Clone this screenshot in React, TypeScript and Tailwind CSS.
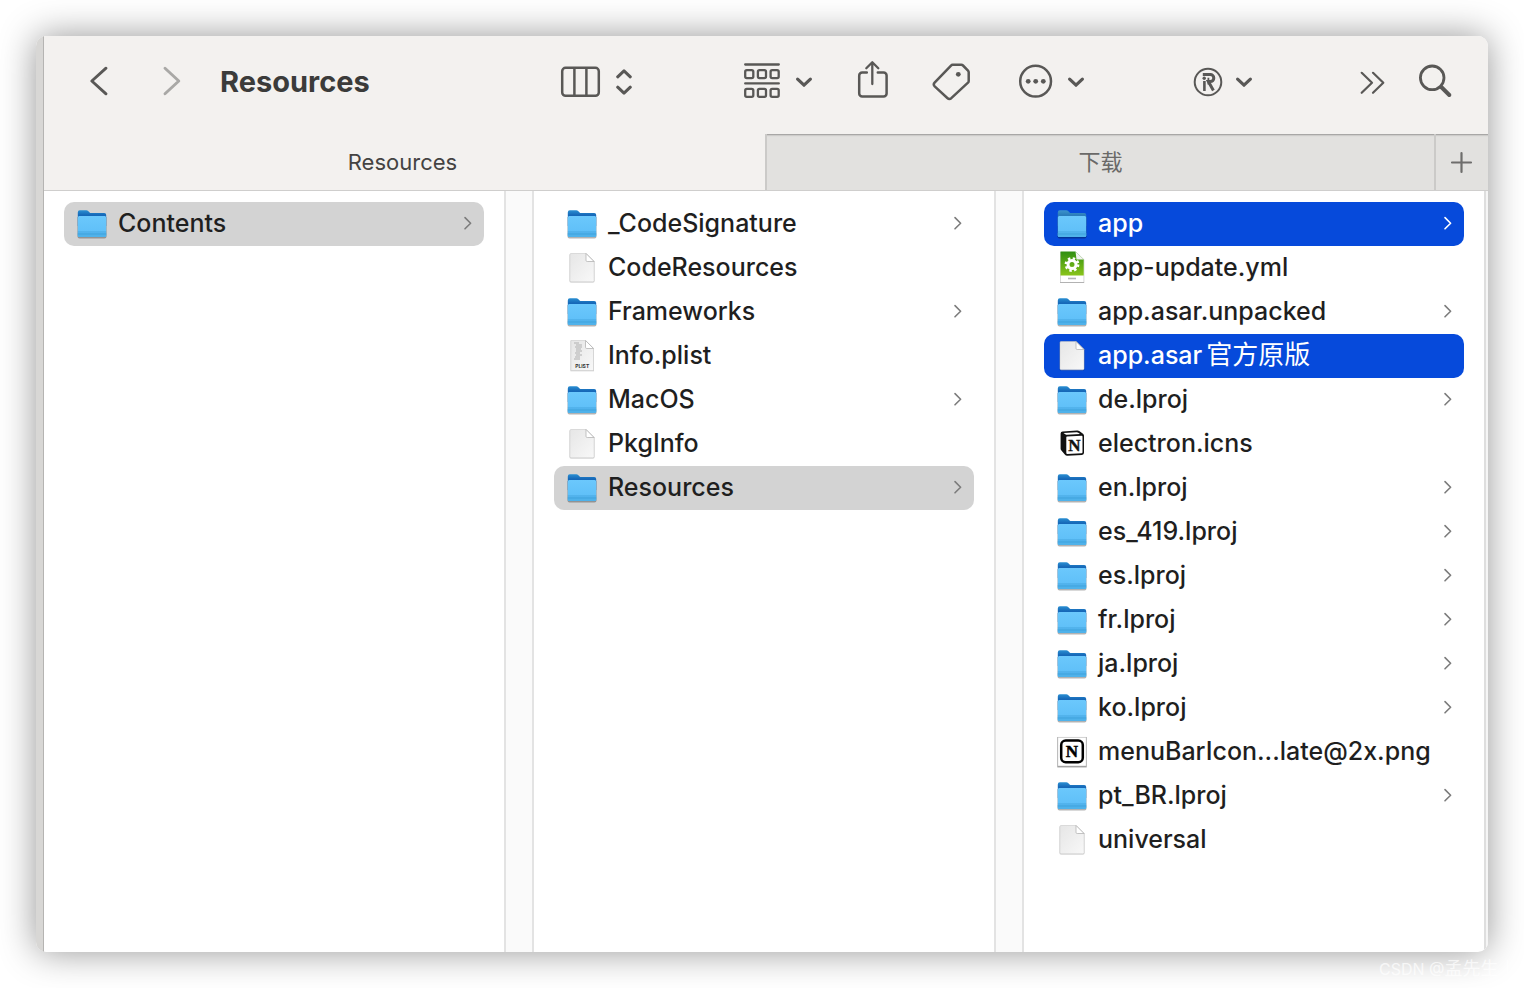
import React, { useState } from "react";

const ink = "#595856";

function Chevron({ className = "" }: { className?: string }) {
  return (
    <svg width="20" height="44" viewBox="0 0 20 44" fill="none" className={className} aria-hidden="true">
      <path d="M3.6 19.2 10 25.2 16.4 19.2" stroke={ink} strokeWidth="3.2" strokeLinecap="round" strokeLinejoin="round" />
    </svg>
  );
}

function ArrowIcon({ color, flip = false }: { color: string; flip?: boolean }) {
  return (
    <svg width="40" height="44" viewBox="0 0 40 44" fill="none" aria-hidden="true">
      <path d={flip ? "M13 8.2 26.8 21 13 33.8" : "M27 8.2 12.8 21 27 33.8"} stroke={color} strokeWidth="2.9" strokeLinecap="round" strokeLinejoin="round" />
    </svg>
  );
}

function ColumnsIcon() {
  return (
    <svg width="72" height="44" viewBox="0 0 72 44" fill="none" stroke={ink} aria-hidden="true">
      <rect x="2.2" y="7.8" width="36.6" height="28" rx="3.4" strokeWidth="2.5" />
      <path d="M14.4 8v28M26.4 8v28" strokeWidth="2.5" />
      <path d="M57.7 16.8 64 10.8 70.3 16.8M57.7 27.2 64 33.2 70.3 27.2" strokeWidth="3" strokeLinecap="round" strokeLinejoin="round" />
    </svg>
  );
}

function GroupIcon() {
  return (
    <svg width="36" height="44" viewBox="0 0 36 44" fill="none" stroke={ink} strokeWidth="2.3" aria-hidden="true">
      <path d="M1.2 4.5h33.6M1.2 23.4h33.6" strokeLinecap="round" />
      {[1.2, 13.9, 26.6].map((x) => (
        <g key={x}>
          <rect x={x} y="10.2" width="8.1" height="8" rx="1.6" />
          <rect x={x} y="28.8" width="8.1" height="8" rx="1.6" />
        </g>
      ))}
    </svg>
  );
}

function ShareIcon() {
  return (
    <svg width="32" height="44" viewBox="0 0 32 44" fill="none" stroke={ink} strokeWidth="2.5" strokeLinecap="round" strokeLinejoin="round" aria-hidden="true">
      <path d="M9.8 12.6H5.2a3 3 0 0 0-3 3V33.6a3 3 0 0 0 3 3H26.6a3 3 0 0 0 3-3V15.6a3 3 0 0 0-3-3H20.8" />
      <path d="M15.3 24V3M9.3 8.2 15.3 2.2 21.3 8.2" strokeWidth="2.3" />
    </svg>
  );
}

function TagIcon() {
  return (
    <svg width="40" height="44" viewBox="0 0 40 44" fill="none" aria-hidden="true">
      <path d="M20.6 4.8H29.3Q30.3 4.8 31 5.5L36 10.6Q36.7 11.3 36.7 12.3V21Q36.7 22 36 22.7L19.3 38.2Q17.3 39.8 15.3 38L2.7 26.3Q.9 24.5 2.6 22.7L19 5.6Q19.7 4.8 20.6 4.8Z" stroke={ink} strokeWidth="2.5" strokeLinejoin="round" />
      <circle cx="26.3" cy="14.3" r="2.4" fill={ink} />
    </svg>
  );
}

function MoreIcon() {
  return (
    <svg width="36" height="44" viewBox="0 0 36 44" fill="none" aria-hidden="true">
      <circle cx="17.6" cy="21.2" r="15.4" stroke={ink} strokeWidth="2.5" />
      <g fill={ink}>
        <circle cx="10.2" cy="21.3" r="2.4" />
        <circle cx="17.7" cy="21.3" r="2.4" />
        <circle cx="25.3" cy="21.3" r="2.4" />
      </g>
    </svg>
  );
}

function RegisteredIcon() {
  return (
    <svg width="32" height="44" viewBox="0 0 32 44" fill="none" stroke={ink} aria-hidden="true">
      <circle cx="16" cy="22" r="13.3" strokeWidth="2" />
      <path d="M10.8 14.6H18.3A3.5 3.5 0 0 1 18.3 21.600H16.400L21.400 30.400" strokeWidth="3" />
      <path d="M12.400 21V31" strokeWidth="2.600" />
      <path d="M16.400 17.800V24.500" strokeWidth="1.800" />
      <circle cx="12.200" cy="18.300" r="1.700" fill={ink} stroke="none" />
    </svg>
  );
}

function MoreItemsIcon() {
  return (
    <svg width="28" height="44" viewBox="0 0 28 44" fill="none" stroke={ink} strokeWidth="2.2" strokeLinecap="round" strokeLinejoin="round" aria-hidden="true">
      <path d="M2.7 12.8 13 22.8 2.7 32.8M14 12.8 24.3 22.8 14 32.8" />
    </svg>
  );
}

function SearchIcon() {
  return (
    <svg width="36" height="44" viewBox="0 0 36 44" fill="none" stroke={ink} strokeLinecap="round" aria-hidden="true">
      <circle cx="14.2" cy="17.8" r="11.8" strokeWidth="2.8" />
      <path d="M23.3 27 31.3 35" strokeWidth="4" />
    </svg>
  );
}

function FolderIcon({ muted }: { muted?: boolean }) {
  return (
    <svg width="32" height="36" viewBox="0 0 32 36" aria-hidden="true">
      <defs>
        <linearGradient id="folderBack" x1="0" y1="0" x2="0" y2="1">
          <stop offset="0" stopColor="#2a8fd2" />
          <stop offset=".3" stopColor="#1668b8" />
        </linearGradient>
        <linearGradient id="folderFront" x1="0" y1="0" x2="0" y2="1">
          <stop offset="0" stopColor="#6bc8fc" />
          <stop offset="1" stopColor="#5cbdf7" />
        </linearGradient>
        <linearGradient id="folderBackMuted" x1="0" y1="0" x2="0" y2="1">
          <stop offset="0" stopColor="#3d94cc" />
          <stop offset=".3" stopColor="#2b7dbb" />
        </linearGradient>
      </defs>
      <path d="M1.5 11H30.5V30.4Q30.500 32.400 28.500 32.400H3.500Q1.500 32.400 1.500 30.400Z" fill="#000" opacity=".3" />
      <path d="M1.8 6.5Q1.8 4.3 3.8 4.3H10.2Q11.5 4.3 12.4 5.2L13.6 6.4Q14.2 7 15.2 7H28.2Q30.2 7 30.2 9V20H1.8Z" fill={muted ? "url(#folderBackMuted)" : "url(#folderBack)"} />
      <path d="M1.8 11.5Q1.8 10 3.3 10H28.7Q30.2 10 30.2 11.5V29.500Q30.200 31 28.700 31H3.300Q1.800 31 1.800 29.500Z" fill="url(#folderFront)" />
      <path d="M1.8 27H30.2V29.500Q30.200 31 28.700 31H3.300Q1.800 31 1.800 29.500Z" fill="#4fb2ea" />
      <path d="M1.8 26H30.2M1.8 28H30.2" stroke="#3a9bd8" strokeWidth=".7" />
    </svg>
  );
}

function PageIcon({ plist = false }: { plist?: boolean }) {
  return (
    <svg width="32" height="36" viewBox="0 0 32 36" aria-hidden="true">
      <defs>
        <linearGradient id="paper" x1="0" y1="0" x2="1" y2="1">
          <stop offset="0" stopColor="#e6e6e6" />
          <stop offset="1" stopColor="#f8f8f8" />
        </linearGradient>
      </defs>
      <path d={plist ? "M4.5 2.5H20L28 10.5V33.2H4.5Z" : "M5 3.5H20.5L28.5 11.5V31Q28.5 32.5 27 32.5H5Q3.5 32.5 3.5 31V5Q3.5 3.5 5 3.5Z"} fill="#000" opacity=".22" />
      <path d={plist ? "M5 2.5H19.5L27.5 10.5V32.5H5Z" : "M5 3.5H20L28 11.5V30.6Q28 31.8 26.8 31.8H5.2Q4 31.8 4 30.6V4.5Q4 3.5 5 3.5Z"} fill="url(#paper)" stroke="#cfcfcf" strokeWidth=".5" />
      <path d={plist ? "M19.5 2.5V9.3Q19.5 10.5 20.7 10.5H27.5Z" : "M20 3.5V10.3Q20 11.5 21.2 11.5H28Z"} fill="#fff" stroke="#b4b4b4" strokeWidth=".8" />
      {plist && (
        <g>
          <path d="M8 5h5M10 7h6M9 9h7M10 11h5M10 13h6M9 15h5M10 17h6M9 19h5M8 21h6" stroke="#b0b0b0" strokeWidth="1.1" />
          <text x="16.2" y="29.6" textAnchor="middle" fontFamily="Inter, sans-serif" fontSize="5" fontWeight="700" fill="#333">PLIST</text>
        </g>
      )}
    </svg>
  );
}

function YmlIcon() {
  return (
    <svg width="32" height="36" viewBox="0 0 32 36" aria-hidden="true">
      <defs>
        <linearGradient id="leaf" x1="0" y1="0" x2="0" y2="1">
          <stop offset="0" stopColor="#2f8f12" />
          <stop offset="1" stopColor="#8ac41a" />
        </linearGradient>
      </defs>
      <path d="M4 2H20L28.2 9.5V33H4Z" fill="#000" opacity=".3" />
      <path d="M4.5 1.5H19.5L27.7 9.5V32H4.5Z" fill="#fff" />
      <path d="M4.5 1.5H19.5L27.7 9.5V25.5H4.5Z" fill="url(#leaf)" />
      <path d="M19.5 1.5 27.7 9.5H20.5Z" fill="#f2f2f2" />
      <circle cx="16" cy="14.5" r="4" fill="none" stroke="#fff" strokeWidth="3" />
      <circle cx="16" cy="14.5" r="6.2" fill="none" stroke="#fff" strokeWidth="2.4" strokeDasharray="2.435 2.435" />
      <path d="M12 28.5h8" stroke="#b5b5b5" strokeWidth="1.6" />
    </svg>
  );
}

function CubeIcon() {
  return (
    <svg width="32" height="36" viewBox="0 0 32 36" aria-hidden="true">
      <path d="M4.600 7.500Q4.600 5.700 6.600 5.500L21 4.600Q22.500 4.500 23.600 5.300L27 7.800Q28 8.600 28 9.800V26.800Q28 28.800 26 28.900L11.500 29.700Q9.800 29.800 8.800 28.500L5.200 24.200Q4.600 23.400 4.600 22.400Z" fill="#111" />
      <path d="M7.500 7 20.800 6.200Q21.600 6.200 22.300 6.700L24 7.900 11 8.700Q10 8.700 9.300 8.200Z" fill="#fff" />
      <path d="M11 10.600 25.600 9.800Q26.500 9.800 26.500 10.700V26.200Q26.500 27.200 25.500 27.300L11.300 28.100Q10.300 28.100 10.300 27.100V11.600Q10.300 10.700 11 10.600Z" fill="#fff" />
      <text x="18.4" y="24.8" textAnchor="middle" fontFamily="'Liberation Serif', serif" fontSize="17" fontWeight="700" fill="#111" stroke="#111" strokeWidth=".4">N</text>
    </svg>
  );
}

function MenuBarIcon() {
  return (
    <svg width="32" height="36" viewBox="0 0 32 36" aria-hidden="true">
      <rect x="1.3" y="3" width="29.4" height="30.4" fill="#000" opacity=".4" />
      <rect x="1.9" y="3.2" width="28.2" height="28.8" fill="#fff" stroke="#bbb" strokeWidth=".5" />
      <rect x="5.2" y="6.600" width="21.6" height="21.6" rx="4.5" fill="#fff" stroke="#000" strokeWidth="2.5" />
      <text x="16" y="23" textAnchor="middle" fontFamily="'Liberation Serif', serif" fontSize="17" fontWeight="700" fill="#000" stroke="#000" strokeWidth=".5">N</text>
    </svg>
  );
}

type Kind = "folder" | "page" | "plist" | "yml" | "cube" | "menubar";
type Entry = { name: string; suffix?: string; kind: Kind; state?: "gray" | "blue" };

const columns: { label: string; entries: Entry[] }[] = [
  { label: "App", entries: [{ name: "Contents", kind: "folder", state: "gray" }] },
  {
    label: "Contents",
    entries: [
      { name: "_CodeSignature", kind: "folder" },
      { name: "CodeResources", kind: "page" },
      { name: "Frameworks", kind: "folder" },
      { name: "Info.plist", kind: "plist" },
      { name: "MacOS", kind: "folder" },
      { name: "PkgInfo", kind: "page" },
      { name: "Resources", kind: "folder", state: "gray" },
    ],
  },
  {
    label: "Resources",
    entries: [
      { name: "app", kind: "folder", state: "blue" },
      { name: "app-update.yml", kind: "yml" },
      { name: "app.asar.unpacked", kind: "folder" },
      { name: "app.asar", suffix: "官方原版", kind: "page", state: "blue" },
      { name: "de.lproj", kind: "folder" },
      { name: "electron.icns", kind: "cube" },
      { name: "en.lproj", kind: "folder" },
      { name: "es_419.lproj", kind: "folder" },
      { name: "es.lproj", kind: "folder" },
      { name: "fr.lproj", kind: "folder" },
      { name: "ja.lproj", kind: "folder" },
      { name: "ko.lproj", kind: "folder" },
      { name: "menuBarIcon...late@2x.png", kind: "menubar" },
      { name: "pt_BR.lproj", kind: "folder" },
      { name: "universal", kind: "page" },
    ],
  },
];

function EntryIcon({ entry }: { entry: Entry }) {
  switch (entry.kind) {
    case "folder":
      return <FolderIcon muted={entry.state === "blue"} />;
    case "yml":
      return <YmlIcon />;
    case "cube":
      return <CubeIcon />;
    case "menubar":
      return <MenuBarIcon />;
    default:
      return <PageIcon plist={entry.kind === "plist"} />;
  }
}

const rowStyle = {
  none: "font-[450] text-[#1f1f1f]",
  gray: "bg-[#d3d3d3] font-[450] text-[#1f1f1f]",
  blue: "bg-[#064adb] font-medium text-white",
};

function Row({ entry }: { entry: Entry }) {
  return (
    <li>
      <button type="button" className={`flex h-11 w-full items-center rounded-[10px] pl-3 pr-2 text-left ${rowStyle[entry.state ?? "none"]}`}>
        <span className="shrink-0">
          <EntryIcon entry={entry} />
        </span>
        <span className="ml-[10px] min-w-0 flex-1 whitespace-nowrap pb-[2px] text-[25px] leading-8">
          {entry.name}
          {entry.suffix && <span className="ml-1 text-[26px] font-normal">{entry.suffix}</span>}
        </span>
        {entry.kind === "folder" && (
          <svg width="18" height="20" viewBox="0 0 18 20" fill="none" className="shrink-0" aria-hidden="true">
            <path d="M7 3.6 12.600 9.200 7 14.800" stroke={entry.state === "blue" ? "#fff" : "#7c7c7c"} strokeWidth="1.6" strokeLinecap="round" strokeLinejoin="round" />
          </svg>
        )}
      </button>
    </li>
  );
}

export default function App() {
  const [tab, setTab] = useState(0);
  return (
    <div className="relative flex min-h-screen overflow-hidden bg-white p-9 font-['Inter','Noto_Sans_CJK_SC',sans-serif]">
      <main className="flex min-w-0 flex-1 overflow-hidden rounded-[10px] bg-white shadow-[0_0_36px_rgba(0,0,0,0.42)]">
        <div className="w-2 shrink-0 border-r border-[#b5b4b2] bg-[#d8d7d5]" />
        <div className="flex min-w-0 flex-1 flex-col">
          <header className="flex h-[98px] items-center bg-[#f3f1ef] pb-[6px] pl-[35px] pr-[34px]">
            <button type="button" aria-label="Back"><ArrowIcon color={ink} /></button>
            <button type="button" aria-label="Forward" className="ml-[33px]"><ArrowIcon color="#a9a8a6" flip /></button>
            <h1 className="ml-7 flex-1 text-[29px] font-bold leading-9 text-[#3b3b3a]">Resources</h1>
            <button type="button" aria-label="Column view"><ColumnsIcon /></button>
            <button type="button" aria-label="Group items" className="ml-28 flex gap-[14px]"><GroupIcon /><Chevron /></button>
            <button type="button" aria-label="Share" className="ml-[43px]"><ShareIcon /></button>
            <button type="button" aria-label="Tags" className="ml-[43px]"><TagIcon /></button>
            <button type="button" aria-label="More actions" className="ml-[46px] flex gap-3"><MoreIcon /><Chevron /></button>
            <button type="button" aria-label="Registered" className="ml-[106px] flex gap-[10px]"><RegisteredIcon /><Chevron /></button>
            <button type="button" aria-label="More items" className="ml-[105px]"><MoreItemsIcon /></button>
            <button type="button" aria-label="Search" className="ml-[31px]"><SearchIcon /></button>
          </header>
          <div role="tablist" className="flex h-14 bg-[#f3f1ef] text-[22px] leading-7">
            <button type="button" role="tab" aria-selected={tab === 0} onClick={() => setTab(0)} className="flex-[720] pr-1 text-[#444342]">
              Resources
            </button>
            <button type="button" role="tab" aria-selected={tab === 1} onClick={() => setTab(1)} className="flex-[670] border-l-2 border-[#cbcac8] bg-[#e2e1df] text-[#6a6968] shadow-[inset_0_3px_2px_-2px_rgba(0,0,0,0.35)]">
              下载
            </button>
            <button type="button" aria-label="New tab" className="flex w-[54px] items-center justify-center border-l-2 border-[#cbcac8] bg-[#e2e1df] shadow-[inset_0_3px_2px_-2px_rgba(0,0,0,0.35)]">
              <svg width="24" height="24" viewBox="0 0 24 24" stroke="#6e6d6c" strokeWidth="2.2" strokeLinecap="round" aria-hidden="true">
                <path d="M11.5 3v19M2 12.500h19" />
              </svg>
            </button>
          </div>
          <div className="flex flex-1 border-t border-[#cfcecd]">
            {columns.map((column, i) => (
              <React.Fragment key={column.label}>
                <ul aria-label={column.label} className="min-w-0 flex-1 px-5 pt-[11px]">
                  {column.entries.map((entry) => (
                    <Row key={entry.name} entry={entry} />
                  ))}
                </ul>
                {i < 2 ? (
                  <div className="w-[30px] shrink-0 border-x-2 border-[#e3e3e3] bg-[#fafafa]" />
                ) : (
                  <div className="w-1 shrink-0 border-l-2 border-[#dedede] bg-[#f5f5f5]" />
                )}
              </React.Fragment>
            ))}
          </div>
        </div>
      </main>
      <p className="absolute bottom-[5px] right-0 w-[145px] whitespace-nowrap text-[16px] leading-7 text-white/70">
        CSDN @<span className="text-[18px]">孟先生丨</span>
      </p>
    </div>
  );
}
